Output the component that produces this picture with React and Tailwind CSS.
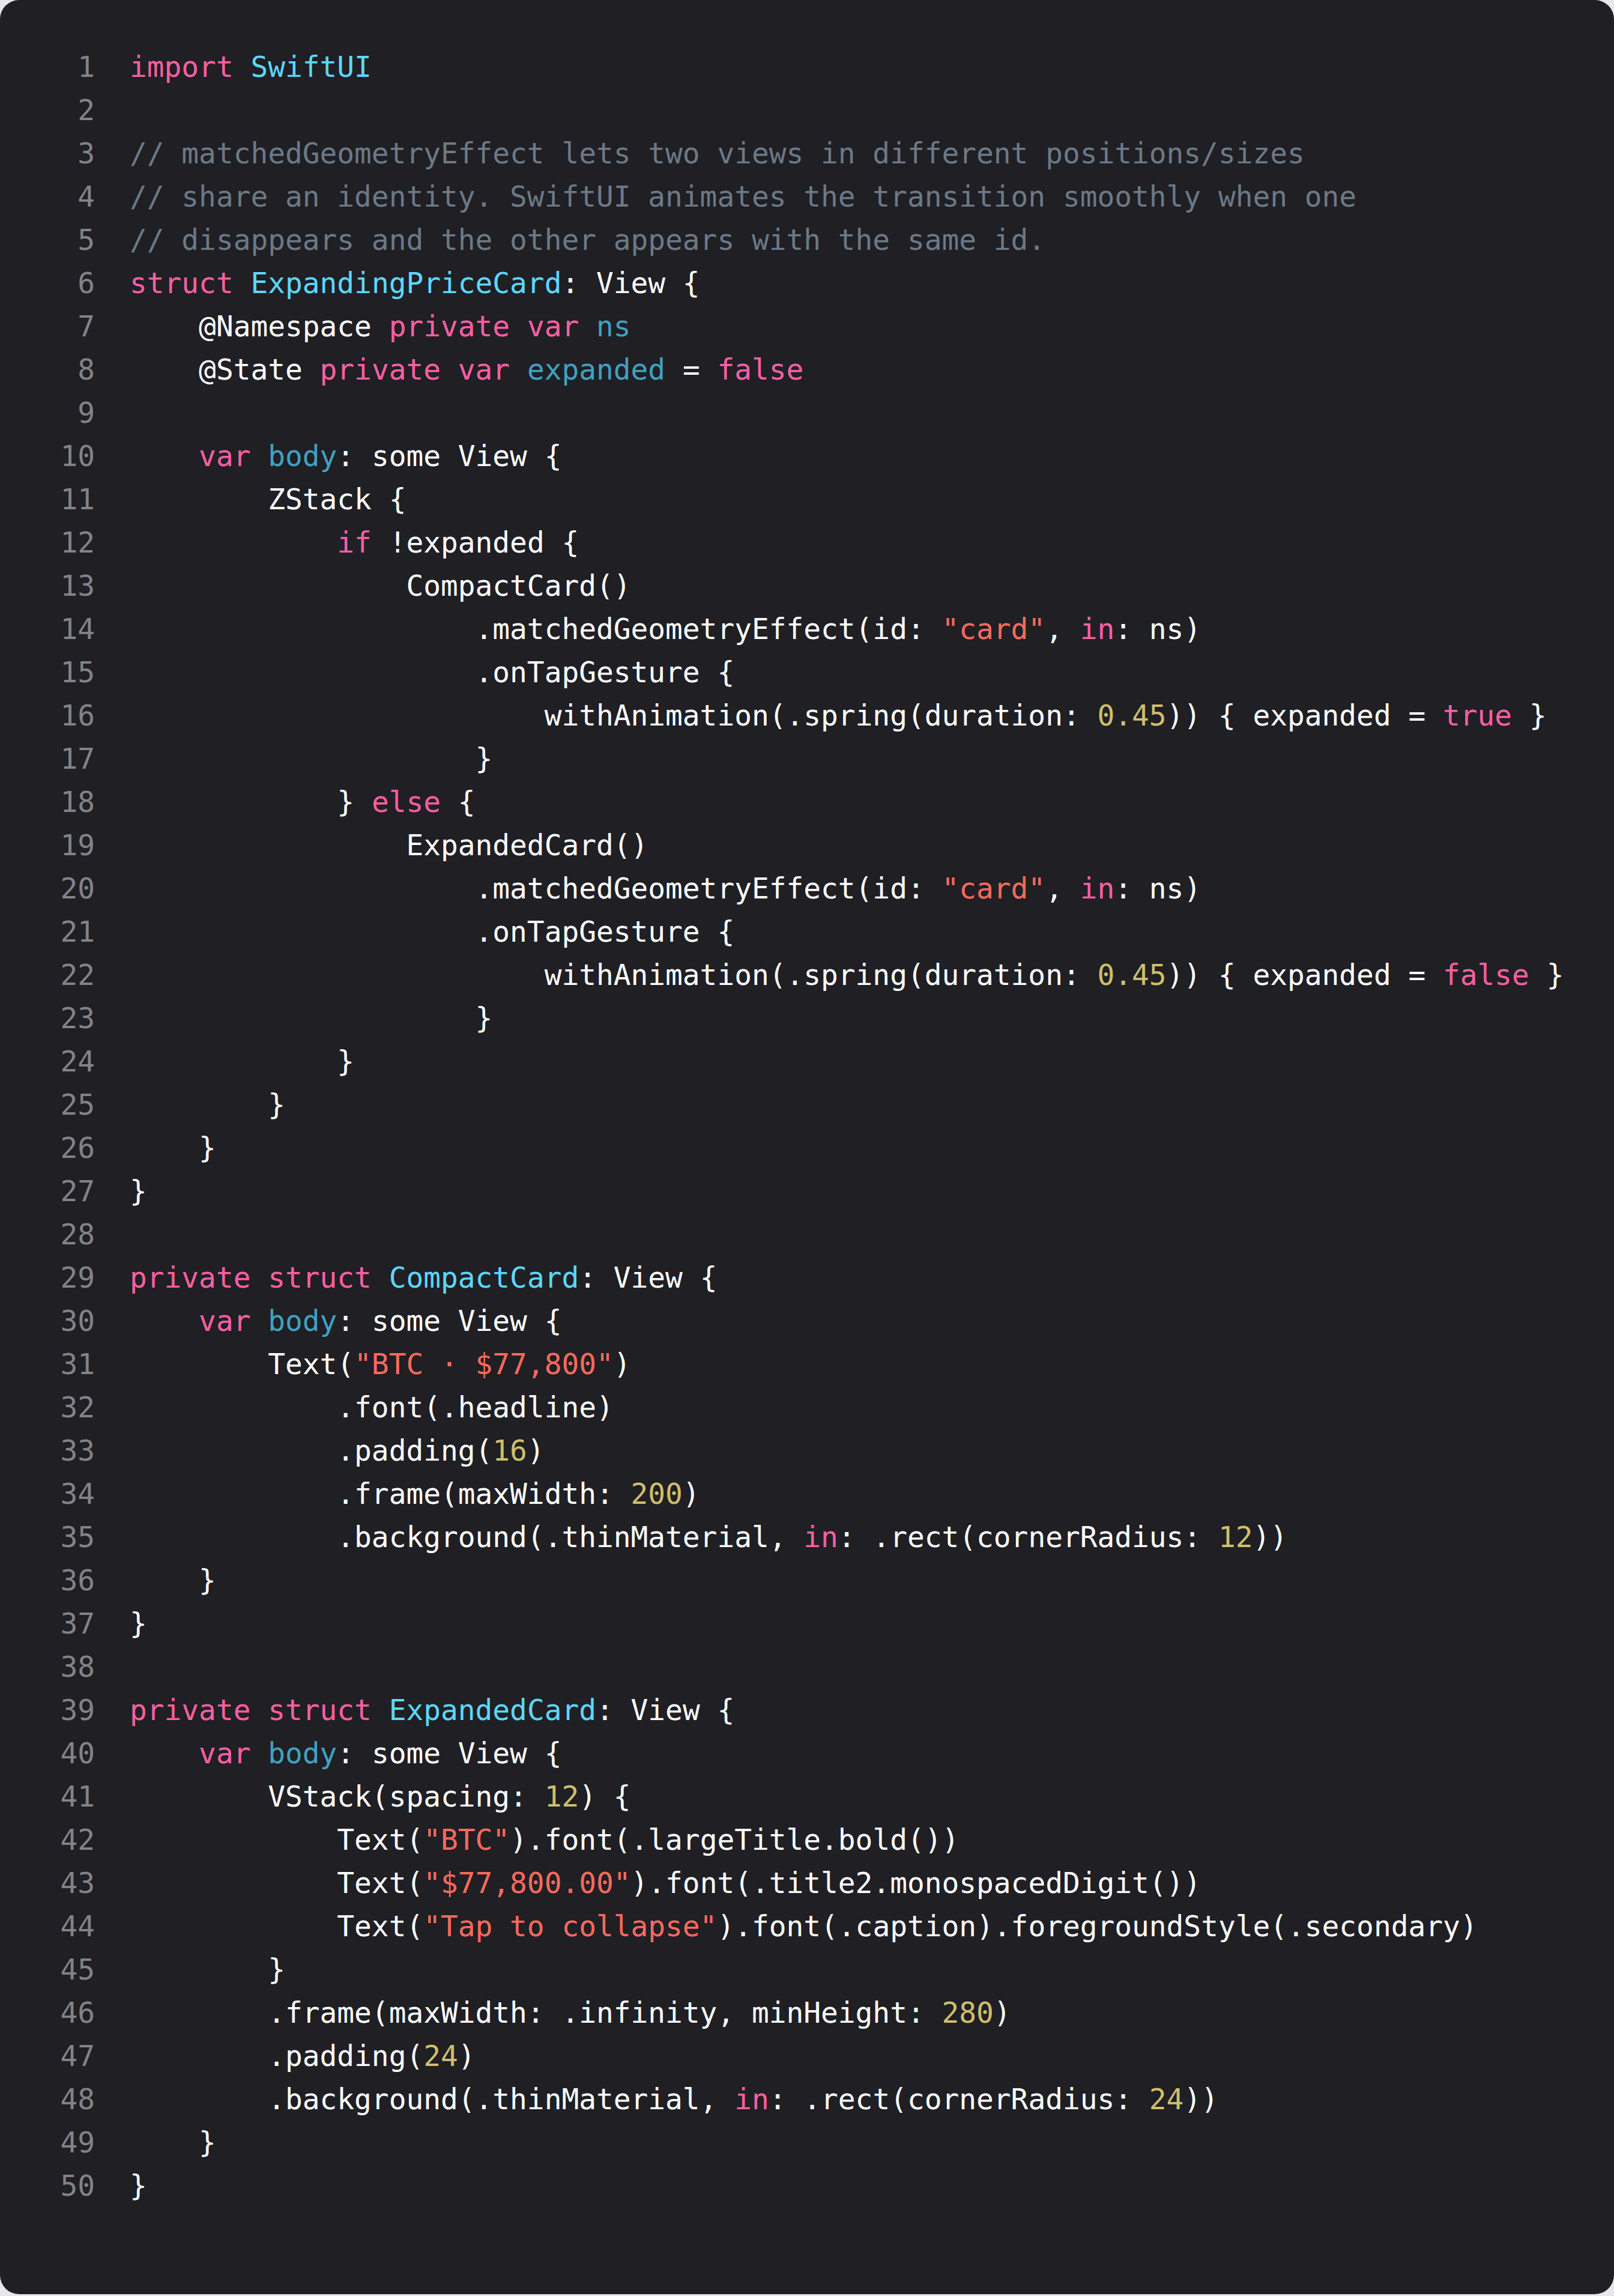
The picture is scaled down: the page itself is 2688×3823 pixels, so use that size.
const colors = {
    k: 'text-[#fc5fa3]',
    t: 'text-[#5dd8ff]',
    d: 'text-[#41a1c0]',
    c: 'text-[#6c7986]',
    s: 'text-[#fc6a5d]',
    n: 'text-[#d0bf69]',
    p: 'text-white'
}

// each line is a list of [text, kind]
const lines = [
    [['import', 'k'], [' '], ['SwiftUI', 't']],
    [],
    [['// matchedGeometryEffect lets two views in different positions/sizes', 'c']],
    [['// share an identity. SwiftUI animates the transition smoothly when one', 'c']],
    [['// disappears and the other appears with the same id.', 'c']],
    [['struct', 'k'], [' '], ['ExpandingPriceCard', 't'], [': View {']],
    [['    @Namespace '], ['private', 'k'], [' '], ['var', 'k'], [' '], ['ns', 'd']],
    [['    @State '], ['private', 'k'], [' '], ['var', 'k'], [' '], ['expanded', 'd'], [' = '], ['false', 'k']],
    [],
    [['    '], ['var', 'k'], [' '], ['body', 'd'], [': some View {']],
    [['        ZStack {']],
    [['            '], ['if', 'k'], [' !expanded {']],
    [['                CompactCard()']],
    [['                    .matchedGeometryEffect(id: '], ['"card"', 's'], [', '], ['in', 'k'], [': ns)']],
    [['                    .onTapGesture {']],
    [['                        withAnimation(.spring(duration: '], ['0.45', 'n'], [')) { expanded = '], ['true', 'k'], [' }']],
    [['                    }']],
    [['            } '], ['else', 'k'], [' {']],
    [['                ExpandedCard()']],
    [['                    .matchedGeometryEffect(id: '], ['"card"', 's'], [', '], ['in', 'k'], [': ns)']],
    [['                    .onTapGesture {']],
    [['                        withAnimation(.spring(duration: '], ['0.45', 'n'], [')) { expanded = '], ['false', 'k'], [' }']],
    [['                    }']],
    [['            }']],
    [['        }']],
    [['    }']],
    [['}']],
    [],
    [['private', 'k'], [' '], ['struct', 'k'], [' '], ['CompactCard', 't'], [': View {']],
    [['    '], ['var', 'k'], [' '], ['body', 'd'], [': some View {']],
    [['        Text('], ['"BTC · $77,800"', 's'], [')']],
    [['            .font(.headline)']],
    [['            .padding('], ['16', 'n'], [')']],
    [['            .frame(maxWidth: '], ['200', 'n'], [')']],
    [['            .background(.thinMaterial, '], ['in', 'k'], [': .rect(cornerRadius: '], ['12', 'n'], ['))']],
    [['    }']],
    [['}']],
    [],
    [['private', 'k'], [' '], ['struct', 'k'], [' '], ['ExpandedCard', 't'], [': View {']],
    [['    '], ['var', 'k'], [' '], ['body', 'd'], [': some View {']],
    [['        VStack(spacing: '], ['12', 'n'], [') {']],
    [['            Text('], ['"BTC"', 's'], [').font(.largeTitle.bold())']],
    [['            Text('], ['"$77,800.00"', 's'], [').font(.title2.monospacedDigit())']],
    [['            Text('], ['"Tap to collapse"', 's'], [').font(.caption).foregroundStyle(.secondary)']],
    [['        }']],
    [['        .frame(maxWidth: .infinity, minHeight: '], ['280', 'n'], [')']],
    [['        .padding('], ['24', 'n'], [')']],
    [['        .background(.thinMaterial, '], ['in', 'k'], [': .rect(cornerRadius: '], ['24', 'n'], ['))']],
    [['    }']],
    [['}']]
]

function App() {
    return (
        <div className="bg-[#e8e8ea] min-h-screen">
            <div className="h-[3820px] bg-[#1f1f24] rounded-[32px] pt-[76px] pl-[100px] font-['DejaVu_Sans_Mono',monospace] text-[47.8px] leading-[72px]">
                {lines.map((line, i) => (
                    <div key={i} className="flex whitespace-pre">
                        <span className="w-[58px] text-right text-[#838387] shrink-0">{i + 1}</span>
                        <span className="pl-[58px]">
                            {line.map(([text, kind], j) => (
                                <span key={j} className={colors[kind || 'p']}>{text}</span>
                            ))}
                        </span>
                    </div>
                ))}
            </div>
        </div>
    )
}

export default App
